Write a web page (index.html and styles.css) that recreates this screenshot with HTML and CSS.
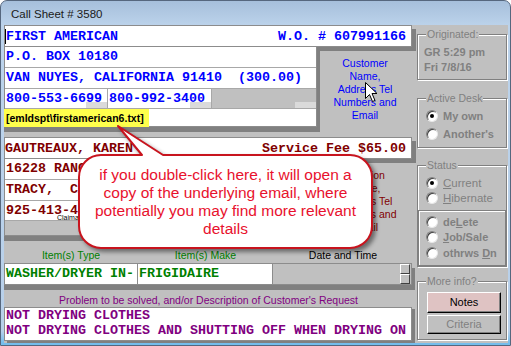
FILE: index.html
```html
<!DOCTYPE html>
<html lang="en">
<head>
    <meta charset="UTF-8">
    <title>Call Sheet # 3580</title>
    <link rel="stylesheet" href="styles.css">
</head>
<body>
<div class="window">
    <div class="titlebar">Call Sheet # 3580</div>
    <div class="client">
        <div class="left">
            <div class="party customer">
                <div class="head"><span class="caret">FIRST AMERICAN</span><span>W.O. # 607991166</span></div>
                <div class="body">
                    <div class="rows">
                        <div class="row">P.O. BOX 10180</div>
                        <div class="row">VAN NUYES, CALIFORNIA 91410  (300.00)</div>
                        <div class="row phones">
                            <div class="cell tab">800-553-6699</div>
                            <div class="cell tab">800-992-3400</div>
                            <div class="cell off tab"></div>
                        </div>
                        <div class="row email"><span class="mark">[emldspt\firstamerican6.txt]</span></div>
                    </div>
                    <div class="caption">Customer<br>Name,<br>Address Tel<br>Numbers and<br>Email</div>
                </div>
            </div>

            <div class="party claimant">
                <div class="head"><span>GAUTREAUX, KAREN</span><span>Service Fee $65.00</span></div>
                <div class="body">
                    <div class="rows">
                        <div class="row">16228 RANCHO WAY</div>
                        <div class="row">TRACY,  CA 95304</div>
                        <div class="row phones">
                            <div class="cell tab">925-413-4123<span class="tiny">Claimant</span></div>
                            <div class="cell tab"></div>
                            <div class="cell off tab"></div>
                        </div>
                        <div class="row blank"></div>
                    </div>
                    <div class="caption">Location<br>Name,<br>Address Tel<br>Numbers and<br>Email</div>
                </div>
            </div>

            <div class="items">
                <div class="labels">
                    <span>Item(s) Type</span>
                    <span>Item(s) Make</span>
                    <span class="dt">Date and Time</span>
                </div>
                <div class="cells">
                    <div class="cell">WASHER/DRYER IN-</div>
                    <div class="cell">FRIGIDAIRE</div>
                    <div class="cell off date"><span class="spin"><i></i><i></i></span></div>
                </div>
            </div>

            <div class="problem">
                <div class="plabel">Problem to be solved, and/or Description of Customer's Request</div>
                <div class="pbox">NOT DRYING CLOTHES<br>NOT DRYING CLOTHES AND SHUTTING OFF WHEN DRYING ON</div>
            </div>
        </div>

        <div class="side">
            <fieldset class="group orig">
                <legend>Originated:</legend>
                <div class="stamp">GR 5:29 pm</div>
                <div class="stamp">Fri 7/8/16</div>
            </fieldset>

            <fieldset class="group desk">
                <legend>Active Desk</legend>
                <div class="opt"><span class="radio on"></span>My own</div>
                <div class="opt"><span class="radio"></span>Another's</div>
            </fieldset>

            <fieldset class="group status">
                <legend>Status</legend>
                <div class="opt thin"><span class="radio on"></span><span><u>C</u>urrent</span></div>
                <div class="opt thin"><span class="radio"></span><span><u>H</u>ibernate</span></div>
                <div class="inner">
                    <div class="opt"><span class="radio"></span><span>de<u>L</u>ete</span></div>
                    <div class="opt"><span class="radio"></span><span><u>J</u>ob/Sale</span></div>
                    <div class="opt"><span class="radio"></span><span>othrws <u>D</u>n</span></div>
                </div>
            </fieldset>

            <fieldset class="group more">
                <legend>More info?</legend>
                <div class="btn notes">Notes</div>
                <div class="btn criteria">Criteria</div>
            </fieldset>
        </div>
    </div>

    <svg class="bubble" width="511" height="346" viewBox="0 0 511 346">
        <path d="M101 155 H142 L118 126 L163 155 H350 A22 22 0 0 1 372 177 V226 A22 22 0 0 1 350 248 H101 A22 22 0 0 1 79 226 V177 A22 22 0 0 1 101 155 Z"/>
    </svg>
    <div class="bubble-text">if you double-click here, it will open a<br>copy of the underlying email, where<br>potentially you may find more relevant<br>details</div>

    <svg class="pointer" width="14" height="21" viewBox="0 0 14 21">
        <path d="M0.5 0.5 V16.5 L4.5 12.5 L7.5 19.5 L10 18.5 L7 11.5 H12 Z"/>
    </svg>
</div>
</body>
</html>
```

FILE: styles.css
```css
* {
    box-sizing: border-box;
}

body {
    margin: 0;
    font-family: "Liberation Sans", Arial, sans-serif;
    font-size: 10.5px;
}

.window {
    position: relative;
    width: 511px;
    height: 346px;
    display: flex;
    flex-direction: column;
    padding: 0 2px 2px 3px;
    border: 1px solid #56677e;
    border-radius: 7px 7px 0 0;
    background: linear-gradient(#a6bfdb, #bcd3eb 25px, #b8d0ea 330px, #74bdec 342px);
    overflow: hidden;
}

.titlebar {
    height: 24px;
    padding: 1px 0 0 7px;
    line-height: 24px;
    font-size: 11.5px;
    color: #1a1a1a;
}

.client {
    flex: 1;
    display: grid;
    grid-template-columns: 409px 95px;
    align-content: start;
    background: #c0c0c0;
}

.left {
    display: flex;
    flex-direction: column;
}

/* text fields */
.party,
.cells,
.pbox {
    font-family: "Liberation Mono", "DejaVu Sans Mono", monospace;
    font-weight: bold;
    font-size: 13.33px;
}

.customer { color: #0000ff; }
.claimant { color: #800000; margin-top: 10px; }

.head {
    position: relative;
    width: 408px;
    height: 22px;
    display: flex;
    justify-content: space-between;
    align-items: center;
    padding: 0 5px 0 0;
    background: #fff;
    border: 1px solid #8c8c8c;
    box-shadow: 4px 4px 0 #808080;
    white-space: pre;
}

.caret {
    border-left: 1px solid #000;
}

.body {
    display: flex;
}

.rows {
    position: relative;
    width: 313px;
    background: #fff;
    border: 1px solid #8c8c8c;
    border-top: 0;
    box-shadow: 3px 5px 0 #808080, 0 5px 0 #808080, 3px 0 0 #808080;
}

.row {
    height: 21px;
    padding-left: 1px;
    line-height: 20px;
    border-bottom: 1px solid #a8a8a8;
    white-space: pre;
}

.phones {
    display: flex;
    height: 20px;
    padding: 0;
    line-height: 19px;
}

.cell {
    position: relative;
    padding-left: 1px;
    white-space: pre;
}

.phones .cell {
    width: 103px;
    border-right: 1px solid #a8a8a8;
}

.phones .cell + .cell {
    width: 104px;
}

.phones .off {
    flex: 1;
    border-right: 0;
}

.off {
    background: #c0c0c0;
}

.tab::after {
    content: "";
    position: absolute;
    right: 0;
    bottom: 0;
    width: 21px;
    height: 6px;
    background: #dadada;
}

.tiny {
    position: absolute;
    left: 52px;
    bottom: -2px;
    font-family: "Liberation Sans", Arial, sans-serif;
    font-weight: normal;
    font-size: 7px;
    line-height: 8px;
    color: #000;
}

.email {
    height: 17px;
    padding: 0;
    border-bottom: 0;
}

.mark {
    display: inline-block;
    height: 18px;
    margin-left: -1px;
    padding: 0 5px 0 2px;
    background: #ffff4c;
    color: #000;
    font-family: "Liberation Sans", Arial, sans-serif;
    font-size: 10.5px;
    line-height: 18px;
}

.blank {
    height: 14px;
    background: #c0c0c0;
    border-bottom: 0;
}

.caption {
    flex: 1;
    padding-top: 10px;
    text-align: center;
    font-family: "Liberation Sans", Arial, sans-serif;
    font-weight: normal;
    font-size: 10.5px;
    line-height: 13px;
}

/* items */
.items {
    margin-top: 13px;
}

.labels {
    display: flex;
    height: 13px;
    line-height: 13px;
    color: #008000;
    text-align: center;
}

.labels span:nth-child(1) { width: 134px; }
.labels span:nth-child(2) { width: 135px; }
.labels .dt { flex: 1; color: #000; }

.cells {
    width: 408px;
    height: 22px;
    margin-top: 1px;
    display: flex;
    color: #008000;
    background: #fff;
    border: 1px solid #8c8c8c;
    line-height: 20px;
    box-shadow: 3px 5px 0 #808080, 0 5px 0 #808080;
}

.cells .cell {
    border-right: 1px solid #8c8c8c;
}

.cells .cell:nth-child(1) { width: 133px; }
.cells .cell:nth-child(2) { width: 135px; }

.cells .date {
    flex: 1;
    display: flex;
    justify-content: flex-end;
    border-right: 0;
}

.spin {
    display: flex;
    flex-direction: column;
    width: 10px;
    margin-right: 1px;
}

.spin i {
    flex: 1;
    background: #c0c0c0;
    border: 1px solid;
    border-color: #fff #404040 #404040 #fff;
}

/* problem */
.problem {
    margin-top: 9px;
}

.plabel {
    height: 12px;
    line-height: 12px;
    color: #800080;
    text-align: center;
}

.pbox {
    width: 408px;
    height: 34px;
    margin-top: 1px;
    padding: 0 0 0 1px;
    color: #800080;
    background: #fff;
    border: 1px solid #8c8c8c;
    line-height: 15px;
    box-shadow: 3px 2px 0 #808080;
}

/* side panel */
.side {
    display: flex;
    flex-direction: column;
    padding: 0 1px 0 4px;
}

.group {
    margin: 0;
    min-width: 0;
    padding: 0 0 0 6px;
    border: 1px solid #808080;
    box-shadow: 1px 1px 0 #fff, inset 1px 1px 0 #fff;
}

.group legend {
    margin-left: 2px;
    padding: 0 1px;
    font-size: 10.5px;
    line-height: 12px;
    color: #808080;
    background: #c0c0c0;
}

.orig {
    margin-top: 3px;
    padding-top: 5px;
    padding-bottom: 4px;
}

.stamp {
    font-weight: bold;
    font-size: 11px;
    line-height: 15px;
    color: #808080;
}

.desk {
    margin-top: 12px;
    padding-top: 3px;
    padding-bottom: 4px;
}

.desk .opt {
    height: 18px;
}

.opt {
    display: flex;
    align-items: center;
    gap: 5px;
    height: 15px;
    padding-left: 2px;
    font-weight: bold;
    font-size: 11px;
    color: #808080;
}

.opt.thin {
    font-weight: normal;
    font-size: 11.5px;
}

.radio {
    position: relative;
    width: 12px;
    height: 12px;
    flex: none;
    border-radius: 50%;
    background: #fff;
    border: 1px solid;
    border-color: #808080 #e8e8e8 #e8e8e8 #808080;
    box-shadow: inset 1px 1px 0 #404040;
}

.radio.on::after {
    content: "";
    position: absolute;
    left: 3px;
    top: 3px;
    width: 4px;
    height: 4px;
    border-radius: 50%;
    background: #000;
}

.status {
    margin-top: 11px;
    padding-top: 4px;
    padding-bottom: 0;
}

.inner {
    height: 56px;
    margin: 5px 0 0 -6px;
    padding-top: 3px;
    border: 1px solid #808080;
    box-shadow: inset 1px 1px 0 #fff;
}

.inner .opt {
    height: 15.5px;
    padding-left: 7px;
}

.more {
    margin-top: 8px;
    padding-top: 5px;
    padding-bottom: 5px;
}

.btn {
    width: 74px;
    margin-left: 3px;
    text-align center;
    text-align: center;
    font-size: 11px;
    border: 1px solid;
    border-color: #fff #000 #000 #fff;
    box-shadow: inset -1px -1px 0 #808080;
}

.notes {
    height: 21px;
    line-height: 19px;
    background: #dfc3c3;
    color: #000;
}

.criteria {
    height: 19px;
    margin-top: 2px;
    line-height: 17px;
    background: #c0c0c0;
    color: #808080;
}

/* overlays */
.bubble {
    position: absolute;
    left: -1px;
    top: -1px;
    filter: drop-shadow(3px 3px 2px rgba(0, 0, 0, 0.45));
}

.bubble path {
    fill: #fff;
    stroke: #c8141e;
    stroke-width: 2;
    stroke-linejoin: round;
}

.bubble-text {
    position: absolute;
    left: 78px;
    top: 165px;
    width: 293px;
    text-align: center;
    font-size: 15.5px;
    line-height: 18px;
    color: #e8112d;
}

.pointer {
    position: absolute;
    left: 364px;
    top: 81px;
}

.pointer path {
    fill: #fff;
    stroke: #000;
    stroke-width: 1;
    stroke-linejoin: miter;
}
```
